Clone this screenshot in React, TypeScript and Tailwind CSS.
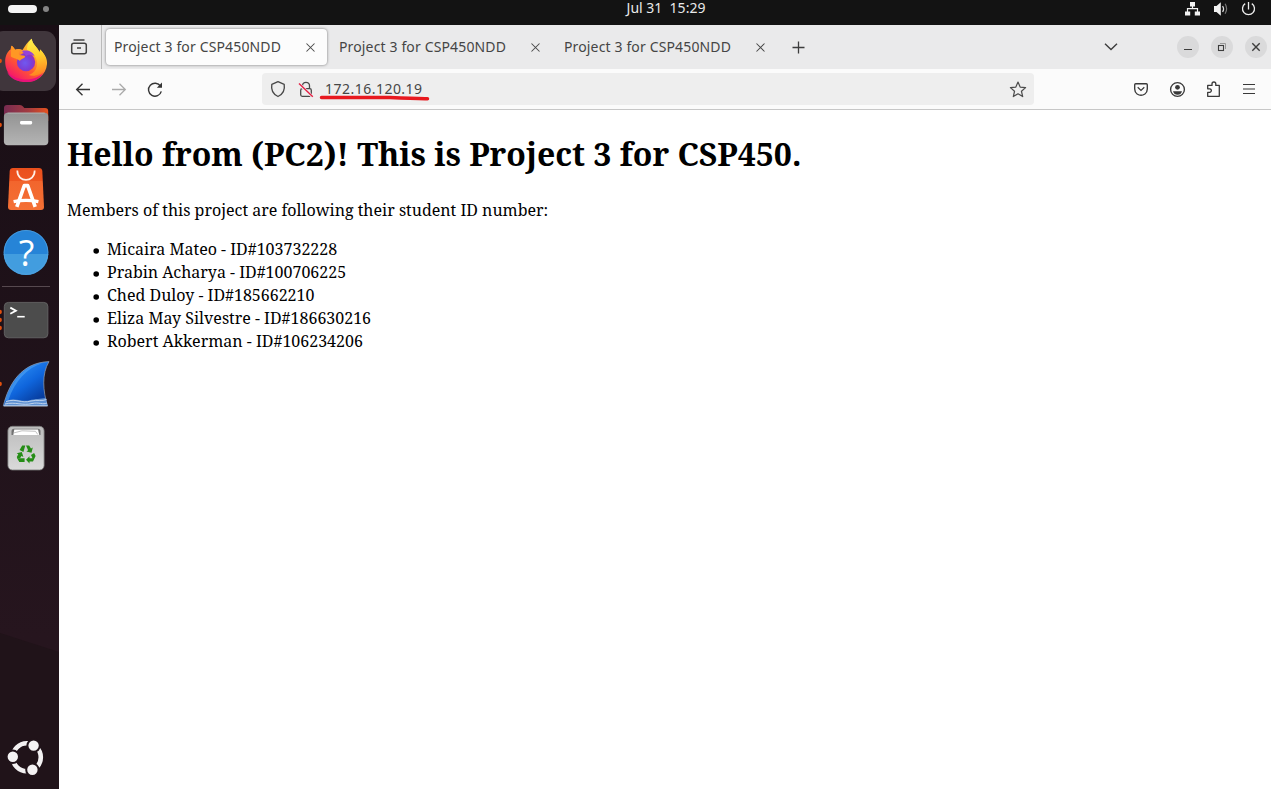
import React from "react";

const TABS = [
  { title: "Project 3 for CSP450NDD", active: true },
  { title: "Project 3 for CSP450NDD", active: false },
  { title: "Project 3 for CSP450NDD", active: false },
];

const MEMBERS = [
  "Micaira Mateo - ID#103732228",
  "Prabin Acharya - ID#100706225",
  "Ched Duloy - ID#185662210",
  "Eliza May Silvestre - ID#186630216",
  "Robert Akkerman - ID#106234206",
];

function DockItem({ dots = 0, children }: { dots?: number; children: React.ReactNode }) {
  const ys = dots === 1 ? [32] : dots === 3 ? [24, 32, 40] : [];
  return (
    <svg className="block h-16 w-[59px] shrink-0" viewBox="0 0 59 64" fill="none">
      {children}
      {ys.map((y) => (
        <circle key={y} cx="-0.3" cy={y} r="2.2" fill="#e2500f" />
      ))}
    </svg>
  );
}

function Firefox() {
  return (
    <DockItem dots={1}>
      <defs>
        <linearGradient id="ffBody" x1="42" y1="12" x2="14" y2="50" gradientUnits="userSpaceOnUse">
          <stop stopColor="#fff04c" />
          <stop offset=".35" stopColor="#ffad2a" />
          <stop offset=".65" stopColor="#ff5a30" />
          <stop offset="1" stopColor="#f5156c" />
        </linearGradient>
        <linearGradient id="ffFlame" x1="32" y1="9" x2="40" y2="44" gradientUnits="userSpaceOnUse">
          <stop stopColor="#fff24f" />
          <stop offset=".5" stopColor="#ffd02d" />
          <stop offset="1" stopColor="#ff8a22" />
        </linearGradient>
        <radialGradient id="ffGlobe" cx="25" cy="34" r="11" gradientUnits="userSpaceOnUse">
          <stop stopColor="#7059f0" />
          <stop offset=".6" stopColor="#7a3fd6" />
          <stop offset="1" stopColor="#9f2bb5" />
        </radialGradient>
      </defs>
      <rect x="-8" y="2" width="64" height="60" rx="11" fill="#40363c" />
      <path d="M5.2 33C5 27 7.5 22.5 10.5 20.5L11.4 16.8C12.8 17.2 14 19.2 15.2 20.8C18 19.7 20.5 20 22.5 21C25 17 27.5 12.5 31.7 9.7C32.5 15.7 37.5 18 39.6 23.2L40.2 20.5C45.5 26 47.4 30 47 35C46 46 37 53 26 53C14 53 5.4 44.5 5.2 33Z" fill="url(#ffBody)" />
      <path d="M27 21C27 15.5 29.5 11.5 31.7 9.7C32.5 15.7 37.5 18 39.6 23.2L40.2 20.5C46 26.3 47.5 32.5 45 39C41.5 46.5 33 48 29 46C38 43 39.5 32 34 26C32 23.5 29 22.5 27 21Z" fill="url(#ffFlame)" />
      <path d="M7 43C17 53 35 53 43.5 43.5C38 53.5 29 53 26 53C17 53 10 49.5 7 43Z" fill="#e8127a" />
      <circle cx="26" cy="33" r="9.2" fill="url(#ffGlobe)" />
      <path d="M22 22C27 20.5 33 22.5 34.5 27C31 25 28 25.5 26 27Z" fill="#9544da" />
      <path d="M10.8 27.5L11.4 16.8C12.8 17.2 14 19.2 15.2 20.8C17.5 20 19.2 20.2 20.5 20.8C19 22.5 18.5 24 19.2 26C22 26.4 24.5 26.2 25.2 27.5C24.3 30 20.8 29.5 20 32C17 29 14 30 10.8 27.5Z" fill="#ff9824" />
    </DockItem>
  );
}

function Files() {
  return (
    <DockItem dots={1}>
      <defs>
        <linearGradient id="flBack" x1="4" y1="16" x2="48" y2="20" gradientUnits="userSpaceOnUse">
          <stop stopColor="#782b51" />
          <stop offset=".55" stopColor="#a33b41" />
          <stop offset="1" stopColor="#e6521e" />
        </linearGradient>
        <linearGradient id="flFront" x1="26" y1="19" x2="26" y2="52" gradientUnits="userSpaceOnUse">
          <stop stopColor="#929292" />
          <stop offset="1" stopColor="#b4b4b4" />
        </linearGradient>
      </defs>
      <path d="M4 28V15Q4 12 7 12H20Q22 12 23 13.5L24.3 15H45Q48.2 15 48.2 18V28Z" fill="url(#flBack)" />
      <rect x="3.9" y="19.7" width="44.4" height="32.6" rx="4" fill="url(#flFront)" />
      <path d="M7.5 20.1H44.7" stroke="#b3b3b3" strokeWidth="0.9" />
      <rect x="20" y="28" width="12.2" height="3.4" rx="1.4" fill="#fff" />
    </DockItem>
  );
}

function AppCenter() {
  return (
    <DockItem>
      <defs>
        <linearGradient id="apBag" x1="26" y1="11" x2="26" y2="53" gradientUnits="userSpaceOnUse">
          <stop stopColor="#ea4f1c" />
          <stop offset=".3" stopColor="#ee5520" />
          <stop offset=".31" stopColor="#f2652d" />
          <stop offset="1" stopColor="#f47035" />
        </linearGradient>
      </defs>
      <path d="M13 11H39Q42 11 42.3 14L44 50Q44 53 41 53H11Q8 53 8 50L9.7 14Q10 11 13 11Z" fill="url(#apBag)" />
      <path d="M17.3 13.5C17.3 26 34.7 26 34.7 13.5" stroke="#fff0e8" strokeWidth="1.7" />
      <path d="M16.8 49.8L24.3 28.6H27.7L35.2 49.8" stroke="#fff" strokeWidth="3.6" strokeLinejoin="round" />
      <path d="M13.6 44.6Q26 42 38.4 44.6" stroke="#fff" strokeWidth="3.2" />
    </DockItem>
  );
}

function Help() {
  return (
    <DockItem>
      <circle cx="26" cy="31.300" r="22.3" fill="#2684d7" />
      <path d="M3.7 33H48.3A22.3 21 0 0 1 3.7 33Z" fill="#429ddf" />
      <circle cx="26" cy="31.300" r="21.9" stroke="#54a3df" strokeWidth=".7" />
      <text x="26.6" y="44.8" textAnchor="middle" fill="#fff" className="font-['Open_Sans',sans-serif] text-[36px]">?</text>
    </DockItem>
  );
}

function Terminal() {
  return (
    <DockItem dots={3}>
      <rect x="4.3" y="14.4" width="43.6" height="35.4" rx="4" fill="#4c4c4c" stroke="#6a6a6a" strokeWidth=".8" />
      <path d="M10.3 19.6L15.9 22.7L10.3 25.8" stroke="#fff" strokeWidth="1.8" />
      <path d="M17.2 28.7H24.7" stroke="#fff" strokeWidth="1.6" />
    </DockItem>
  );
}

function Wireshark() {
  return (
    <DockItem dots={1}>
      <defs>
        <linearGradient id="wsFin" x1="16" y1="17" x2="38" y2="48" gradientUnits="userSpaceOnUse">
          <stop stopColor="#2788f2" />
          <stop offset=".5" stopColor="#0f65dc" />
          <stop offset="1" stopColor="#073d9f" />
        </linearGradient>
      </defs>
      <path d="M3.3 54C9 31 22 10.500 49 9.600C41.5 22 43 39 47.5 54Z" fill="url(#wsFin)" stroke="#9aa5b2" strokeWidth=".7" />
      <path d="M5.2 49C12 28 25 13.500 42 11.300C27 16 15 29 8.500 48Z" fill="#55a8f2" opacity=".55" />
      <path d="M6 49C16 45 21 50 29 48.500C36 46.500 40 47 46 46L47.600 54H3.300Z" fill="#5f91d2" />
      <path d="M6 49.500C17 46 21 52 31 49C38 47.500 42 49.500 46.500 47.500M5 52C15 49.500 23 54 32 51.500C39 50 43 53 47 51M4 53.800H47.500" stroke="#d5e2f2" strokeWidth=".8" />
    </DockItem>
  );
}

function Trash() {
  return (
    <DockItem>
      <defs>
        <linearGradient id="trBin" x1="26" y1="10" x2="26" y2="54" gradientUnits="userSpaceOnUse">
          <stop stopColor="#bcbcbc" />
          <stop offset="1" stopColor="#dadada" />
        </linearGradient>
      </defs>
      <rect x="7.9" y="10.3" width="36.2" height="43.7" rx="4.5" fill="url(#trBin)" stroke="#777" strokeWidth=".8" />
      <path d="M14 12.7H38Q40.5 12.7 40.5 15.5V19H11.5V15.5Q11.5 12.7 14 12.7Z" fill="#727272" />
      <path d="M13.3 19L14.3 13.5H38L39.3 19Z" fill="#fff" />
      <path d="M13.5 17L22 14.8L35.5 15.3L37.8 18.5" stroke="#a6a6a6" strokeWidth=".7" />
      <g fill="#258d16">
        <path d="M19.600 34L22.200 29.600H25.300L23.400 35.900Z" />
        <path d="M26 29.600H29.100L31 32.500L32.800 31.500L31.500 36.800L26.400 35.400L28.100 34.300Z" />
        <path d="M31 38.900L34.100 37L35.600 40L33 45.500H29.500V47.500L26 43.700L29.500 40.300V42.300H32.500Z" />
        <path d="M18.900 42.300H24.600V45.900H19.300L17 42Z" />
        <path d="M16.800 41L18.300 38.200L16.700 37.200L21.800 36L23.400 41.100L21.400 40L20.100 42.200H17.300Z" />
      </g>
    </DockItem>
  );
}

function UbuntuLogo() {
  return (
    <DockItem>
      <circle cx="26.8" cy="32.3" r="14" stroke="#f3f1f2" strokeWidth="4.6" />
      <g fill="#f4f2f3" stroke="#21141a" strokeWidth="2">
        <circle cx="12.8" cy="31.8" r="6.2" />
        <circle cx="33.6" cy="20.6" r="6.2" />
        <circle cx="32.4" cy="44.8" r="6.2" />
      </g>
    </DockItem>
  );
}

function Dock() {
  return (
    <nav className="relative flex w-[59px] shrink-0 flex-col overflow-hidden bg-linear-to-b from-[#190e15] via-[#21131b] via-55% to-[#26151e] to-80% pt-1">
      <svg className="absolute inset-0 h-full w-full" viewBox="0 0 59 764" preserveAspectRatio="none">
        <path d="M0 608L59 627V764H0Z" fill="#201319" />
      </svg>
      <div className="relative flex flex-1 flex-col">
        <Firefox />
        <Files />
        <AppCenter />
        <Help />
        <div className="flex h-[3px] items-center pl-0.5">
          <div className="h-px w-12 bg-[#56494f]" />
        </div>
        <Terminal />
        <Wireshark />
        <Trash />
        <div className="mt-auto">
          <UbuntuLogo />
        </div>
      </div>
    </nav>
  );
}

function SystemBar() {
  return (
    <header className="flex h-[25px] shrink-0 bg-[#131313]">
      <div className="flex w-[566px] gap-1.5 pt-[5px] pl-2">
        <span className="h-2 w-[29px] rounded-full bg-[#f4f4f4]" />
        <span className="mt-px size-1.5 rounded-full bg-[#858585]" />
      </div>
      <div className="w-[200px] text-center font-['Noto_Sans',sans-serif] text-[14px] leading-4 whitespace-pre text-[#e9e9e9]">Jul 31  15:29</div>
      <svg className="ml-auto h-[25px] w-[111px]" viewBox="1160 0 111 25" fill="none">
        <path d="M1190 2h5v4.5h-5zM1185 11.5h5.2v4h-5.2zM1194.8 11.5h5.2v4h-5.2z" fill="#f2f2f2" />
        <path d="M1192.5 6v3M1187.5 12V8.7h10V12" stroke="#f2f2f2" strokeWidth="1.2" />
        <path d="M1214 6h2.5l4.300-3.700v13.400L1216.500 12H1214z" fill="#f2f2f2" />
        <path d="M1222.600 6q2 3 0 6" stroke="#ddd" strokeWidth="1.2" />
        <path d="M1225.100 3.700q3 5 0 10" stroke="#777" strokeWidth="1.2" />
        <path d="M1245.200 3.600a6 6 0 1 0 6.600 0M1248.500 2v7.500" stroke="#ededed" strokeWidth="1.3" />
      </svg>
    </header>
  );
}

function CloseGlyph() {
  return (
    <svg className="size-[9px]" viewBox="0 0 9 9" fill="none">
      <path d="M.5.500l8 8M8.500.500l-8 8" stroke="#464646" strokeWidth="1.050" />
    </svg>
  );
}

function TabBar() {
  return (
    <div className="flex h-11 shrink-0 bg-[#eaeaeb]">
      <div className="flex w-[43px] items-center justify-center border-r border-[#bababa] pr-0.5">
        <svg className="size-[18px]" viewBox="0 0 18 18" fill="none" stroke="#424242">
          <rect x="1.700" y="5.200" width="14.600" height="10.600" rx="2" strokeWidth="1.500" />
          <path d="M3.500 2H14.500" strokeWidth="1.500" />
          <path d="M7 10H11" strokeWidth="1.500" />
        </svg>
      </div>
      <div className="flex gap-1 pt-[3px] pl-1">
        {TABS.map((tab, i) => (
          <div
            key={i}
            className={
              tab.active
                ? "mt-px flex h-[36px] w-[221px] items-center justify-between rounded bg-[#fcfcfc] pr-3 pl-2 shadow-[0_0_3px_rgba(0,0,0,0.5)]"
                : "mt-px flex h-[36px] w-[221px] items-center justify-between pr-3 pl-2"
            }
          >
            <span className="font-['Noto_Sans',sans-serif] text-[14px] leading-5 tracking-[0.14px] whitespace-nowrap text-[#454545]">{tab.title}</span>
            <CloseGlyph />
          </div>
        ))}
      </div>
      <svg className="ml-auto h-11 w-[491px]" viewBox="780 25 491 44" fill="none" stroke="#3d3d3d">
        <path d="M792.500 47.500h12M798.500 41.500v12" strokeWidth="1.300" />
        <path d="M1105 43.800l6 5.800 6-5.800" strokeWidth="1.400" />
        <g fill="#dadadb" stroke="none">
          <circle cx="1188" cy="47" r="11" />
          <circle cx="1222" cy="47" r="11" />
          <circle cx="1256" cy="47" r="11" />
        </g>
        <path d="M1184 49.500h8" />
        <path d="M1220 43.500h5.500v5.500" stroke="#999" />
        <rect x="1218.500" y="45.500" width="5" height="5" strokeWidth="1.100" />
        <path d="M1252.300 43.300l7.400 7.400M1259.700 43.300l-7.400 7.400" strokeWidth="1.400" />
      </svg>
    </div>
  );
}

function AddressBar() {
  return (
    <div className="flex h-[41px] shrink-0 border-b border-[#c7c7c7] bg-[#fbfbfb] pt-1">
      <svg className="h-8 w-[203px] shrink-0" viewBox="59 73 203 32" fill="none">
        <path d="M90 89.500H76.800M82.500 83.700l-5.800 5.800 5.800 5.800" stroke="#353535" strokeWidth="1.400" />
        <path d="M112 89.500h13.200M119.500 83.700l5.800 5.800-5.800 5.800" stroke="#aaa" strokeWidth="1.300" />
        <path d="M160.500 86.200a6.500 6.500 0 1 0 .8 5.200" stroke="#353535" strokeWidth="1.400" />
        <path d="M162 82.600v5.200h-5.200z" fill="#353535" />
      </svg>
      <div className="relative flex h-8 w-[772px] rounded-sm bg-[#eeeeee]">
        <svg className="h-8 w-[63px] shrink-0" viewBox="262 73 63 32" fill="none">
          <path d="M278 81.600L284.200 84.400Q285.600 93 278 96.500Q270.400 93 271.800 84.400Z" stroke="#4a4a4a" strokeWidth="1.350" strokeLinejoin="round" />
          <rect x="300.700" y="88.700" width="10.600" height="7.600" rx="1.500" stroke="#4a4a4a" strokeWidth="1.300" />
          <path d="M302.500 88.500v-2.700a3.500 3.500 0 0 1 7 0v2.700" stroke="#4a4a4a" strokeWidth="1.300" />
          <path d="M298.800 83.700l13.500 12.800" stroke="#eee" strokeWidth="3" />
          <path d="M299 83.500l13.800 13.300" stroke="#e52045" strokeWidth="1.400" />
        </svg>
        <span className="font-['Noto_Sans',sans-serif] text-[14px] leading-8 tracking-[0.480px] text-[#464646]">172.16.120.19</span>
        <svg className="ml-auto h-8 w-8" viewBox="1002 73 32 32" fill="none">
          <path d="M1018 82l2.150 5.100 5.450.5-4.150 3.650 1.250 5.350-4.700-2.850-4.700 2.850 1.250-5.350-4.150-3.650 5.450-.5z" stroke="#4b4b4b" strokeWidth="1.200" strokeLinejoin="round" />
        </svg>
        <svg className="absolute top-[21px] left-[57px] h-[9px] w-[112px]" viewBox="319 94 112 9" fill="none">
          <path d="M321.500 97.600H390C404 98.300 415 98.800 427.500 98.700" stroke="#e8191f" strokeWidth="3.500" strokeLinecap="round" />
        </svg>
      </div>
      <svg className="ml-auto h-8 w-[151px]" viewBox="1120 73 151 32" fill="none" stroke="#393939">
        <path d="M1134.700 84.700q0-1 1-1h10.600q1 0 1 1v4.300q0 3.200-2.400 5-3.900 2.600-7.800 0-2.400-1.800-2.400-5z" strokeWidth="1.350" />
        <path d="M1137.700 87.300l3.300 3.100 3.300-3.100" strokeWidth="1.200" />
        <circle cx="1177.500" cy="89.500" r="6.900" strokeWidth="1.350" />
        <circle cx="1177.500" cy="87.300" r="2.400" fill="#393939" stroke="none" />
        <path d="M1173 91.300h9q-1 3.500-4.500 3.500t-4.500-3.500z" fill="#393939" stroke="none" />
        <path d="M1207.700 96.300v-4h2.300a1.800 1.800 0 0 0 0-3.500h-2.300v-3.400h4.300v-1.500a1.900 1.900 0 0 1 3.800 0v1.500h3.500v10.900z" strokeWidth="1.300" strokeLinejoin="round" />
        <path d="M1243 84.500h12M1243 89h12M1243 93.500h12" strokeWidth="1.200" />
      </svg>
    </div>
  );
}

function PageContent() {
  return (
    <main className="flex-1 bg-white px-2 font-['Noto_Serif',serif] text-black">
      <h1 className="mt-[22px] text-[32px] leading-[44px] font-bold tracking-[-0.015px] whitespace-nowrap">Hello from (PC2)! This is Project 3 for CSP450.</h1>
      <p className="mt-[23px] text-[16px] leading-[23px] whitespace-nowrap">Members of this project are following their student ID number:</p>
      <ul className="mt-4 pl-[26px] text-[16px] leading-[23px]">
        {MEMBERS.map((member) => (
          <li key={member} className="flex items-center gap-2 whitespace-nowrap">
            <svg className="mt-0.5 size-1.5" viewBox="0 0 6 6">
              <circle cx="3.200" cy="3" r="2.800" />
            </svg>
            {member}
          </li>
        ))}
      </ul>
    </main>
  );
}

export default function App() {
  return (
    <div className="flex h-[789px] w-[1271px] flex-col overflow-hidden bg-white">
      <SystemBar />
      <div className="flex min-h-0 flex-1">
        <Dock />
        <div className="flex min-w-0 flex-1 flex-col">
          <TabBar />
          <AddressBar />
          <PageContent />
        </div>
      </div>
    </div>
  );
}
